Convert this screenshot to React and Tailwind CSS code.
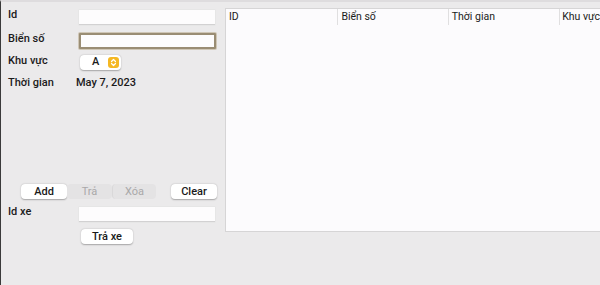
import React from "react";

function Input({ focused }) {
  return focused ? (
    <div className="w-[137px] h-[16px] bg-[#fdfcfd] border-2 border-[#9a8d74] rounded-[1px] shadow-[0_0_0_1px_#cfc6b6]" />
  ) : (
    <div className="w-[136px] h-[15px] bg-[#fdfcfd] border-b border-[#d2d1d2] shadow-[0_0_0_0.5px_#e2e1e2]" />
  );
}

function Btn({ children, disabled, className = "" }) {
  return (
    <div
      className={
        "h-[15px] flex items-center justify-center rounded-[4px] text-[11px] leading-none " +
        (disabled
          ? "bg-[#e4e3e4] text-[#a9a8a9]"
          : "bg-white text-[#1a1a1a] font-medium shadow-[0_0.5px_1.5px_rgba(0,0,0,0.3)]") +
        " " +
        className
      }
    >
      {children}
    </div>
  );
}

export default function App() {
  return (
    <div
      className="w-[600px] h-[285px] bg-[#ebeaeb] border-l border-[#3a3a3a] border-t-2 border-t-[#dedcde] flex text-[#1b1b1b] text-[11px]"
      style={{ fontFamily: "Roboto, 'Noto Sans', sans-serif" }}
    >
      <div className="w-[225px] flex flex-col">
        <div className="flex items-center h-[16px] mt-[7px]">
          <span className="w-[78px] pl-[7px] pb-[4px] font-medium">Id</span>
          <Input />
        </div>
        <div className="flex items-center h-[18px] mt-[7px]">
          <span className="w-[78px] pl-[7px] pb-[4px] font-medium">Biển số</span>
          <Input focused />
        </div>
        <div className="flex items-center h-[16px] mt-[4px]">
          <span className="w-[79px] pl-[7px] pb-[2px] font-medium">Khu vực</span>
          <div className="w-[41px] h-[15px] bg-white rounded-[4px] shadow-[0_0.5px_1.5px_rgba(0,0,0,0.3)] flex items-center pr-[2px]">
            <span className="flex-1 pl-[12px] font-medium">A</span>
            <div className="w-[11px] h-[11px] rounded-[3px] bg-[#f5b823] flex items-center justify-center">
              <svg width="7" height="9" viewBox="0 0 7 9" fill="none" stroke="white" strokeWidth="1.2" strokeLinecap="round" strokeLinejoin="round">
                <path d="M1.5 3.5 L3.5 1.5 L5.5 3.5" />
                <path d="M1.5 5.5 L3.5 7.5 L5.5 5.5" />
              </svg>
            </div>
          </div>
        </div>
        <div className="flex items-center h-[16px] mt-[5px]">
          <span className="w-[75px] pl-[7px] font-medium">Thời gian</span>
          <span className="font-medium">May 7, 2023</span>
        </div>
        <div className="flex items-center mt-[93px] pl-[20px]">
          <Btn className="w-[46px]">Add</Btn>
          <Btn disabled className="w-[45px]">Trả</Btn>
          <Btn disabled className="w-[44px] border-l border-[#d9d8d9]">Xóa</Btn>
          <Btn className="w-[46px] ml-[15px]">Clear</Btn>
        </div>
        <div className="flex items-center h-[16px] mt-[7px]">
          <span className="w-[78px] pl-[7px] pb-[4px] font-medium">Id xe</span>
          <Input />
        </div>
        <div className="pl-[80px] mt-[7px]">
          <Btn className="w-[52px]">Trả xe</Btn>
        </div>
      </div>
      <div className="w-[375px] h-[224px] mt-[6px] bg-[#fcfbfd] border border-[#d6d5d6] border-r-0 flex flex-col">
        <div className="flex h-[14px] mt-[1px] items-center text-[10.5px]">
          <div className="w-[113px] pl-[3px]">ID</div>
          <div className="w-[112px] pl-[3px] border-l border-[#e0dfe0]">Biển số</div>
          <div className="w-[113px] pl-[3px] border-l border-[#e0dfe0]">Thời gian</div>
          <div className="flex-1 pl-[2px] border-l border-[#e0dfe0] whitespace-nowrap">Khu vực</div>
        </div>
      </div>
    </div>
  );
}
